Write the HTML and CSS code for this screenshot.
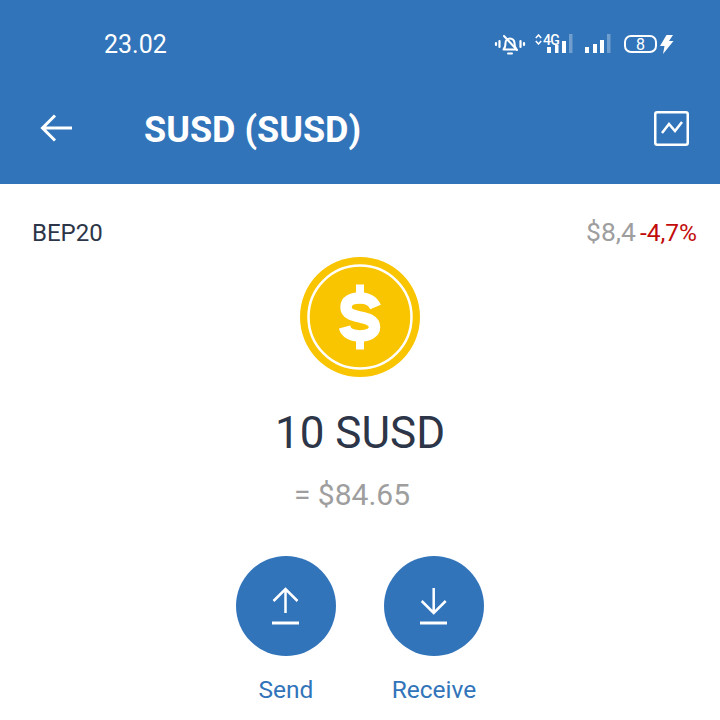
FILE: index.html
```html
<!DOCTYPE html>
<html lang="en">
<head>
  <meta charset="utf-8">
  <meta name="viewport" content="width=device-width, initial-scale=1">
  <title>SUSD (SUSD)</title>
  <link rel="stylesheet" href="styles.css">
</head>
<body>
  <header class="header">
    <div class="status-bar">
      <span class="status-time">23.02</span>
      <div class="status-icons">
        <svg class="icon-bell" width="32" height="22" viewBox="0 0 32 22">
          <g fill="none" stroke="#fff" stroke-linecap="round" stroke-linejoin="round">
            <path d="M2 10v2M5.500 8v6M26.500 8v6M30 10v2" stroke-width="2.200"/>
            <path d="M9.500 16.500c1.500-1.500 2-3 2-6.500a4.500 4.500 0 0 1 9 0c0 3.500.5 5 2 6.500z" stroke-width="2"/>
            <path d="M10 3l13 14" stroke-width="2"/>
            <path d="M14 20.500h4" stroke-width="2"/>
          </g>
        </svg>
        <div class="signal-4g">
          <svg class="net-arrows" width="7" height="11" viewBox="0 0 7 11">
            <path d="M.8 4L3.500 1 6.200 4M.8 7l2.700 3 2.700-3" fill="none" stroke="#fff" stroke-width="1.500"/>
          </svg>
          <span class="net-label">4G</span>
          <svg width="26" height="20" viewBox="0 0 26 20">
            <rect x="0" y="13" width="4" height="6" fill="#fff"/>
            <rect x="8" y="11" width="3.500" height="8" fill="#fff"/>
            <rect x="15" y="7" width="4" height="12" fill="#fff"/>
            <rect x="22" y="0" width="3.500" height="19" fill="#fff" opacity=".3"/>
          </svg>
        </div>
        <svg class="signal" width="26" height="20" viewBox="0 0 26 20">
          <rect x="0" y="13" width="4" height="6" fill="#fff"/>
          <rect x="8" y="10" width="4" height="9" fill="#fff"/>
          <rect x="15" y="6" width="4" height="13" fill="#fff"/>
          <rect x="22" y="0" width="3.500" height="19" fill="#fff" opacity=".3"/>
        </svg>
        <div class="battery"><span>8</span></div>
        <svg class="bolt" width="14" height="19" viewBox="0 0 14 19">
          <path d="M6.500 0L0 11h4.500L3 19l10.500-13H9L13 0z" fill="#fff"/>
        </svg>
      </div>
    </div>
    <div class="toolbar">
      <button class="back-button" aria-label="Back">
        <svg width="36" height="32" viewBox="0 0 36 32">
          <path d="M33 16H4M16 3.500L3.500 16 16 28.500" fill="none" stroke="#fff" stroke-width="3"/>
        </svg>
      </button>
      <h1 class="page-title">SUSD (SUSD)</h1>
      <svg class="chart-icon" width="35" height="35" viewBox="0 0 35 35">
        <rect x="1.250" y="1.250" width="32.500" height="32.500" rx="2" fill="none" stroke="#fff" stroke-width="2.500"/>
        <path d="M8 22l7-9 6 7 7-9" fill="none" stroke="#fff" stroke-width="2.500"/>
      </svg>
    </div>
  </header>

  <main class="main-content">
    <div class="info-row">
      <span class="network">BEP20</span>
      <span class="price">$8,4<span class="change">-4,7%</span></span>
    </div>

    <svg class="coin" width="120" height="120" viewBox="0 0 120 120">
      <circle cx="60" cy="60" r="60" fill="#f9c400"/>
      <circle cx="60" cy="60" r="51.500" fill="none" stroke="#fff" stroke-width="2.500"/>
      <path d="M60 27.500v14M60 78v14.500" stroke="#fff" stroke-width="8"/>
      <path d="M75.500 50C73 44 67 41 60 41 52 41 46 44 46 50 46 57 53 58.500 60 60 67 61.500 74.500 63 74.500 70 74.500 76 68 79 60 79 52 79 46 76 44.500 70" fill="none" stroke="#fff" stroke-width="11.500"/>
    </svg>

    <div class="balance">10 SUSD</div>
    <div class="fiat">= $84.65</div>

    <div class="actions">
      <div class="action">
        <div class="action-circle">
          <svg width="32" height="40" viewBox="0 0 32 40">
            <path d="M15.500 27V3M3.500 15L15.500 3 27.500 15" fill="none" stroke="#fff" stroke-width="2.500"/>
            <path d="M2 37h27" fill="none" stroke="#fff" stroke-width="3"/>
          </svg>
        </div>
        <span class="action-label">Send</span>
      </div>
      <div class="action">
        <div class="action-circle">
          <svg width="32" height="40" viewBox="0 0 32 40">
            <path d="M15.700 2v25M3.700 15l12 12 12-12" fill="none" stroke="#fff" stroke-width="2.500"/>
            <path d="M2 37h27" fill="none" stroke="#fff" stroke-width="3"/>
          </svg>
        </div>
        <span class="action-label">Receive</span>
      </div>
    </div>
  </main>
</body>
</html>
```

FILE: styles.css
```css
:root {
  --primary-color: #3274ba;
  --text-color: #2d3648;
  --muted-color: #9e9e9e;
  --error-color: #c20b0b;
}

* {
  margin: 0;
  padding: 0;
  box-sizing: border-box;
}

html, body {
  height: 720px;
  overflow: hidden;
}

body {
  font-family: Roboto, sans-serif;
  background-color: #fff;
}

.header {
  background-color: var(--primary-color);
  height: 184px;
  color: #fff;
}

.status-bar {
  height: 88px;
  display: flex;
  justify-content: space-between;
  align-items: center;
  padding: 0 46px 0 104px;
}

.status-time {
  font-size: 25px;
}

.status-icons {
  display: flex;
  align-items: center;
}

.icon-bell {
  margin-right: 9px;
}

.signal-4g {
  display: flex;
  align-items: flex-end;
  justify-content: flex-end;
  position: relative;
  width: 38px;
  height: 20px;
  margin-right: 12px;
}

.net-arrows {
  position: absolute;
  left: 0;
  top: 0;
}

.net-label {
  position: absolute;
  left: 8px;
  top: -1px;
  font-size: 14px;
  line-height: 14px;
  font-weight: 500;
  letter-spacing: -0.6px;
}

.signal {
  margin-right: 13px;
}

.battery {
  width: 33px;
  height: 18px;
  border: 2px solid #fff;
  border-radius: 7px;
  display: flex;
  align-items: center;
  justify-content: center;
  font-size: 16px;
  margin-right: 3px;
}

.toolbar {
  height: 82px;
  display: flex;
  align-items: center;
  padding: 0 31px 0 39px;
}

.back-button {
  background: none;
  border: none;
  display: flex;
  width: 36px;
  margin: 0 69px 2px 0;
}

.page-title {
  flex: 1;
  font-size: 36px;
  font-weight: 700;
  margin-top: 1px;
}

.chart-icon {
  margin-bottom: 2px;
}

.main-content {
  display: flex;
  flex-direction: column;
  align-items: center;
  padding: 32px 23px 0 32px;
}

.info-row {
  width: 100%;
  display: flex;
  justify-content: space-between;
  align-items: baseline;
  height: 41px;
}

.network {
  font-size: 24px;
  color: var(--text-color);
}

.price {
  font-size: 26.500px;
  color: var(--muted-color);
}

.change {
  margin-left: 4px;
  font-size: 24.500px;
  color: var(--error-color);
}

.coin {
  margin-left: -9px;
}

.balance {
  margin-top: 30px;
  margin-left: -9px;
  font-size: 44px;
  line-height: 52px;
  color: var(--text-color);
}

.fiat {
  margin-top: 18px;
  margin-left: -25px;
  font-size: 30px;
  line-height: 36px;
  color: var(--muted-color);
}

.actions {
  display: flex;
  gap: 48px;
  margin-top: 43px;
  margin-left: -9px;
}

.action {
  display: flex;
  flex-direction: column;
  align-items: center;
  width: 100px;
}

.action-circle {
  width: 100px;
  height: 100px;
  border-radius: 50%;
  background-color: var(--primary-color);
  display: flex;
  align-items: center;
  justify-content: center;
}

.action-label {
  margin-top: 19px;
  font-size: 24.500px;
  line-height: 30px;
  color: var(--primary-color);
  white-space: nowrap;
}
```
